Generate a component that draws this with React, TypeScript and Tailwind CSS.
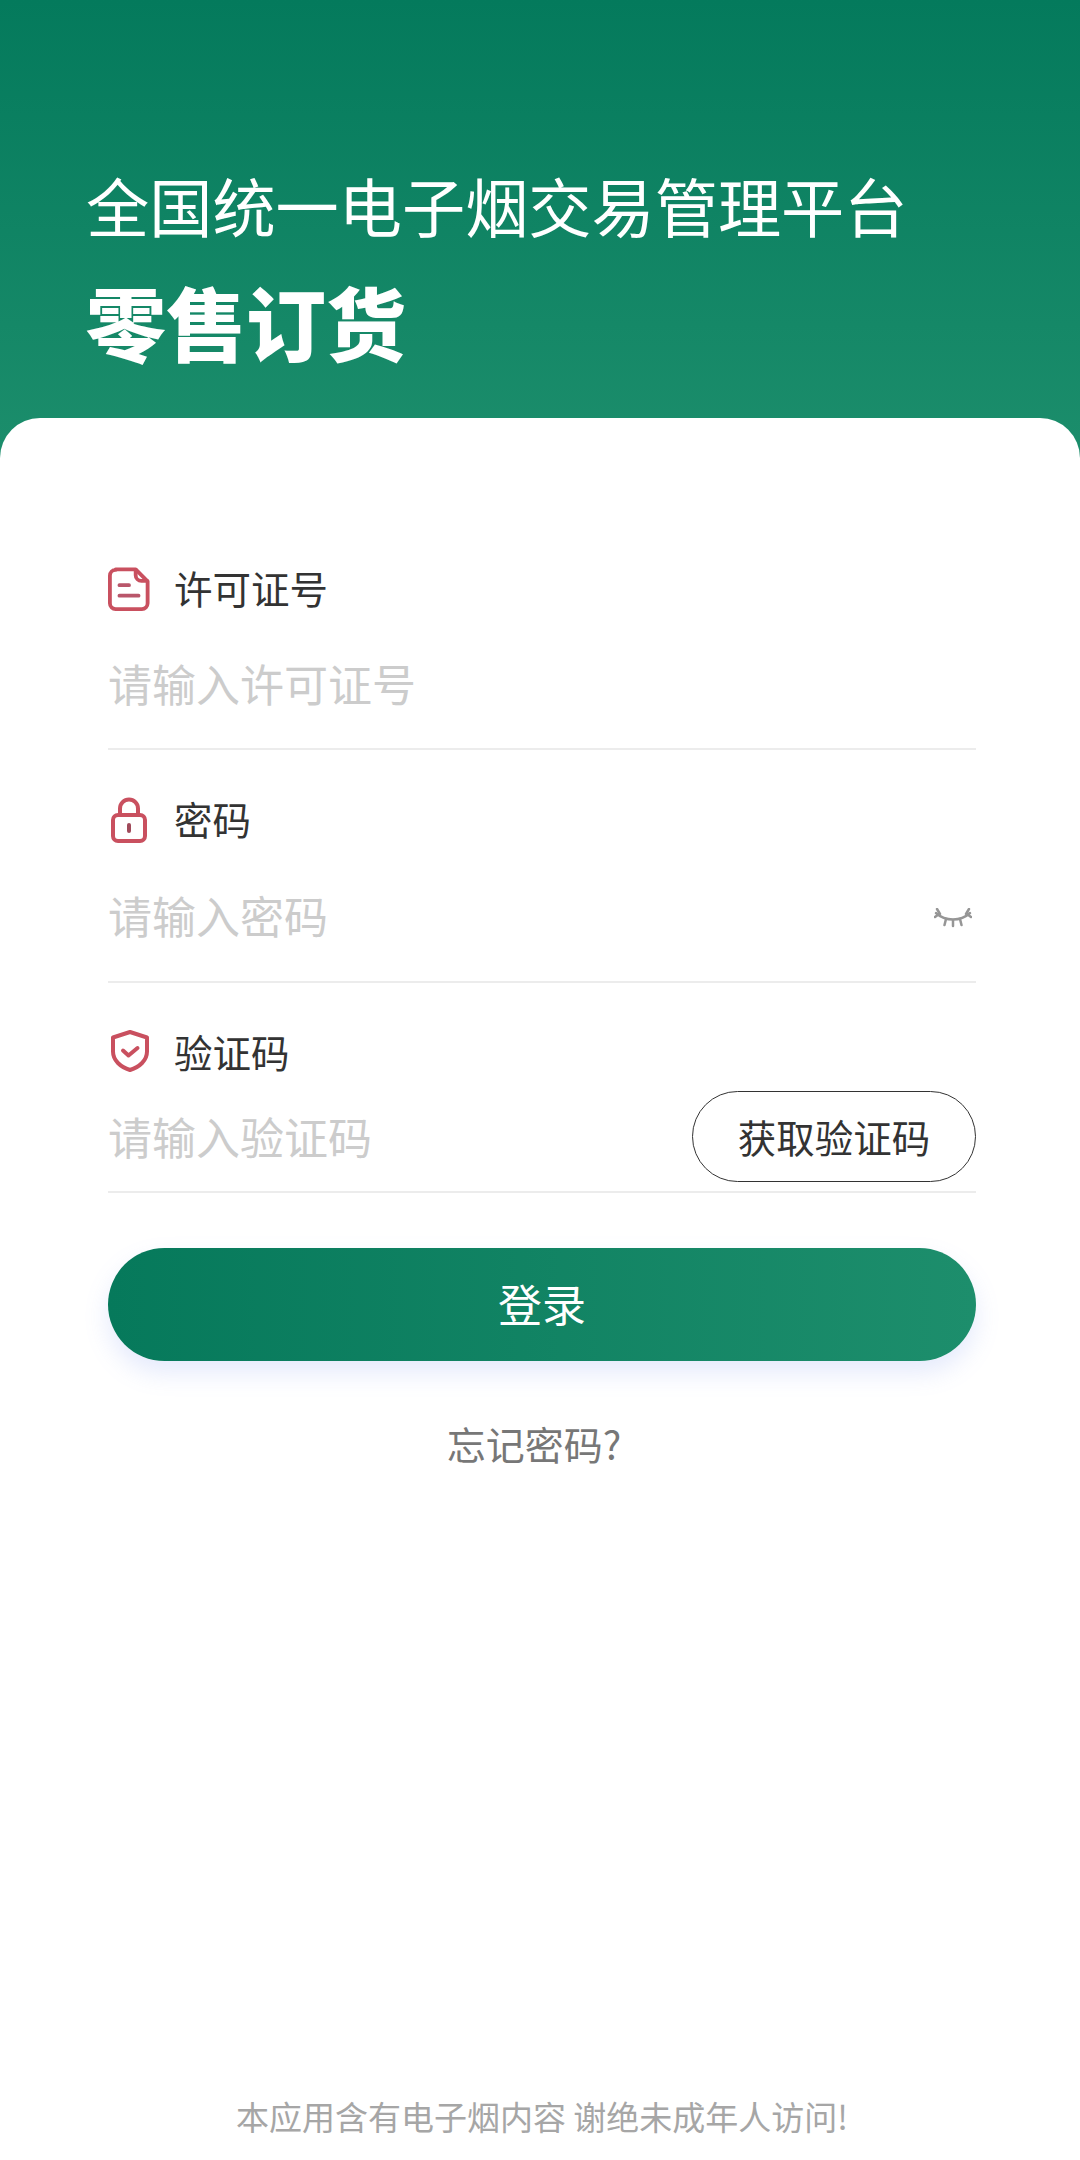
const cjk = 'font-["Noto_Sans_CJK_SC","Liberation_Sans",sans-serif]'

function DocIcon() {
  return (
    <svg width="42" height="44" viewBox="0 0 44 46" fill="none" stroke="#c9505f" strokeWidth="4" strokeLinecap="round" strokeLinejoin="round">
      <path d="M8 2.500h21l12.500 12.500v23a6 6 0 0 1-6 6H8a6 6 0 0 1-6-6v-29a6 6 0 0 1 6-6z" />
      <path d="M29 3v5.500a6 6 0 0 0 6 6h6" />
      <path d="M12 19h10M12 30h20" stroke="#b9566a" />
    </svg>
  )
}

function LockIcon() {
  return (
    <svg width="36" height="46" viewBox="0 0 36 46" fill="none" stroke="#c9505f" strokeWidth="4" strokeLinecap="round" strokeLinejoin="round">
      <rect x="2" y="18" width="32" height="26" rx="5" />
      <path d="M9 18v-6.500a9 9 0 0 1 18 0V18" />
      <path d="M18 28v6" stroke="#a04a5a" />
    </svg>
  )
}

function ShieldIcon() {
  return (
    <svg width="40" height="42" viewBox="0 0 40 42" fill="none" stroke="#c9505f" strokeWidth="4" strokeLinecap="round" strokeLinejoin="round">
      <path d="M20 2l17 5.500v14c0 9-7.500 15.500-17 18.500C10.500 37 3 30.500 3 21.500v-14z" />
      <path d="M13 20.500l5.500 5L27.500 18" />
    </svg>
  )
}

function EyeOffIcon() {
  return (
    <svg width="38" height="22" viewBox="0 0 38 22" fill="none" stroke="#969696" strokeWidth="2.500" strokeLinecap="round">
      <path d="M2 5c5 4.500 10.500 6.500 17 6.500S31 9.500 36 5" />
      <path d="M1 9l4-3M37 9l-4-3M3 1l3 5M35 1l-3 5M12 11l-1.500 6M26 11l1.500 6M19 12v6" />
    </svg>
  )
}

export default function App() {
  return (
    <div className={`${cjk} flex h-[2160px] w-[1080px] flex-col overflow-hidden bg-[linear-gradient(180deg,#047a5c_0px,#1b8d6b_440px)]`}>
      <div className="h-[418px] shrink-0 pl-[86px] pt-[162px] text-white">
        <div className="h-[86px] text-[63.2px] leading-[86px]">全国统一电子烟交易管理平台</div>
        <div className="mt-[17px] text-[80px] font-black leading-[110px]">零售订货</div>
      </div>

      <div className="flex flex-1 flex-col rounded-t-[40px] bg-white pl-[108px] pr-[104px]">
        <div className="flex h-[332px] flex-col border-b-2 border-[#ececec]">
          <div className="mt-[146px] flex h-[50px] items-center">
            <div className="flex w-[66px] items-center"><DocIcon /></div>
            <span className="pb-[3px] text-[38.5px] text-[#333333]">许可证号</span>
          </div>
          <div className="mt-[34px] text-[44px] leading-[70px] text-[#cccccc]">请输入许可证号</div>
        </div>

        <div className="flex h-[233px] flex-col border-b-2 border-[#ececec]">
          <div className="mt-[45px] flex h-[50px] items-center">
            <div className="flex w-[66px] items-center pl-[3px]"><LockIcon /></div>
            <span className="pb-[3px] text-[38.5px] text-[#333333]">密码</span>
          </div>
          <div className="mt-[35px] flex h-[70px] items-center justify-between">
            <span className="text-[44px] text-[#cccccc]">请输入密码</span>
            <div className="pr-[4px] pt-[8px]"><EyeOffIcon /></div>
          </div>
        </div>

        <div className="flex h-[210px] flex-col border-b-2 border-[#ececec]">
          <div className="mt-[45px] flex h-[50px] items-center">
            <div className="flex w-[66px] items-center pb-[4px] pl-[2px]"><ShieldIcon /></div>
            <span className="pb-[3px] text-[38.5px] text-[#333333]">验证码</span>
          </div>
          <div className="mt-[13px] flex items-start justify-between">
            <span className="pt-[15px] text-[44px] leading-[60px] text-[#cccccc]">请输入验证码</span>
            <div className="flex h-[91px] w-[284px] items-center justify-center rounded-full border border-[#333333] text-[38.5px] text-[#333333]">获取验证码</div>
          </div>
        </div>

        <div className="mt-[55px] flex h-[113px] items-center justify-center rounded-full bg-[linear-gradient(90deg,#06795b,#1d8e6c)] pb-[3px] text-[44px] text-white shadow-[0_12px_24px_rgba(110,140,240,0.18)]">登录</div>

        <div className="mt-[54px] pr-[16px] text-center text-[39px] leading-[56px] text-[#777777]">忘记密码?</div>

        <div className="mt-auto pb-[23px] text-center text-[33px] leading-[42px] text-[#a6a6a6]">本应用含有电子烟内容 谢绝未成年人访问!</div>
      </div>
    </div>
  )
}
